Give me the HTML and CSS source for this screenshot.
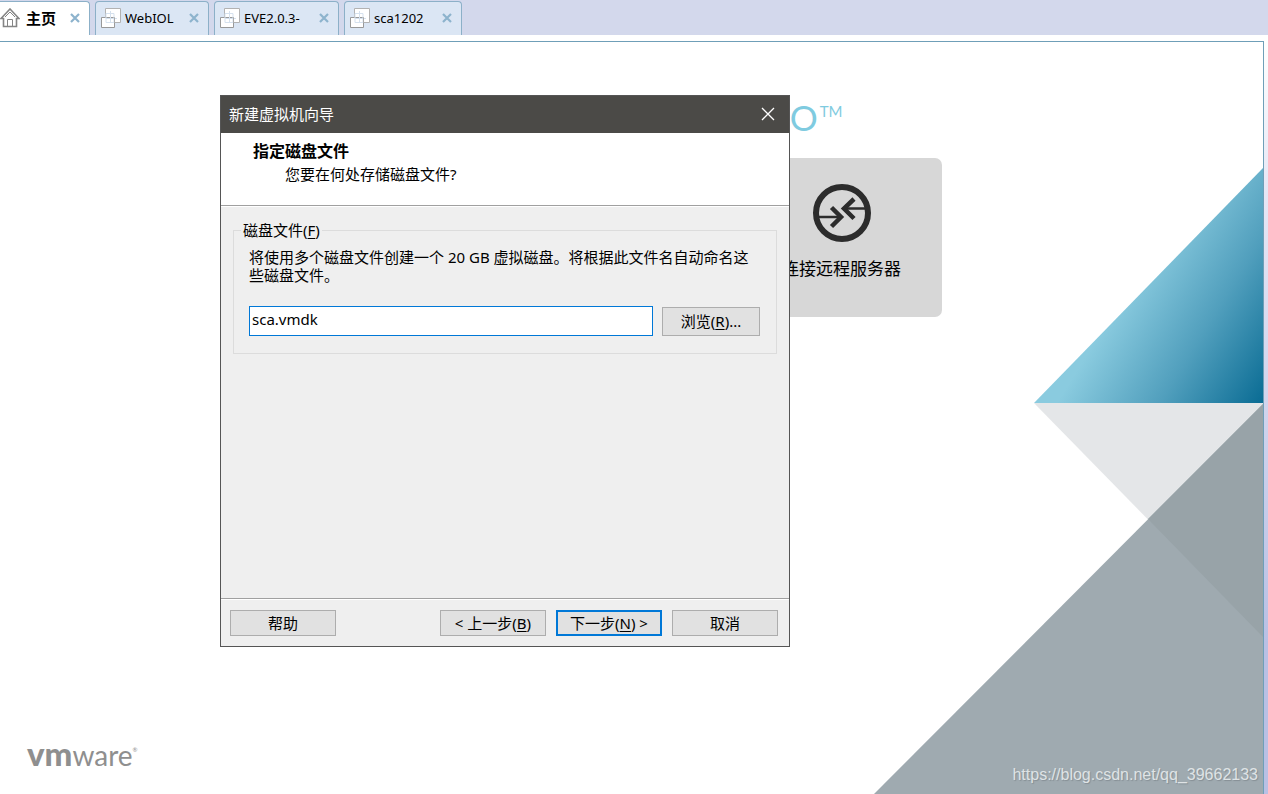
FILE: index.html
```html
<!DOCTYPE html>
<html lang="zh-CN">
<head>
<meta charset="utf-8">
<title>主页</title>
<link rel="stylesheet" href="styles.css">
</head>
<body>
<svg class="symbols" aria-hidden="true">
  <symbol id="pages" viewBox="0 0 20 20">
    <path d="M4.500 .5h15v14h-15z" fill="#fff" stroke="#b2b2b2"/>
    <path d="M.5 9.500h13v10H.5z" fill="#fff" stroke="#999"/>
    <path d="M5 5.500h8v9H5zM9.500 3v12M5 10.500h11" fill="none" stroke="#d5e1ee"/>
    <path d="M13.500 9.500v5" stroke="#aaa"/>
  </symbol>
  <symbol id="cross" viewBox="0 0 10 10">
    <path d="M1 1l8 8M9 1L1 9" fill="none" stroke="#8db3cd" stroke-width="2.200"/>
  </symbol>
</svg>
<nav class="tabs">
  <div class="tab tab-home">
    <svg class="tab-icon" viewBox="0 0 20 20"><path d="M1 10.500L10 1l9 9.500h-2.500V18.500h-13V10.500z" fill="#fff" stroke="#858585" stroke-width="1.600"/><path d="M7.500 18v-6.500h5V18M5 9l5-5 5 5" fill="none" stroke="#858585"/></svg>
    <span class="tab-name">主页</span>
    <button class="tab-close" aria-label="关闭"><svg><use href="#cross"/></svg></button>
  </div>
  <div class="tab tab-web">
    <svg class="tab-icon"><use href="#pages"/></svg>
    <span class="tab-name">WebIOL</span>
    <button class="tab-close" aria-label="关闭"><svg><use href="#cross"/></svg></button>
  </div>
  <div class="tab tab-eve">
    <svg class="tab-icon"><use href="#pages"/></svg>
    <span class="tab-name">EVE2.0.3-</span>
    <button class="tab-close" aria-label="关闭"><svg><use href="#cross"/></svg></button>
  </div>
  <div class="tab tab-sca">
    <svg class="tab-icon"><use href="#pages"/></svg>
    <span class="tab-name">sca1202</span>
    <button class="tab-close" aria-label="关闭"><svg><use href="#cross"/></svg></button>
  </div>
</nav>
<div class="frame">
  <main class="home">
    <svg class="scene" viewBox="0 0 389 626" aria-hidden="true">
      <defs>
        <linearGradient id="sea" gradientUnits="userSpaceOnUse" x1="160" y1="235" x2="326" y2="337">
          <stop offset=".1" stop-color="#8acbdf"/><stop offset=".55" stop-color="#519fbd"/><stop offset="1" stop-color="#0a6c94"/>
        </linearGradient>
      </defs>
      <path d="M160 235H389V469z" fill="#e4e6e8"/>
      <path d="M389 236V626H0z" fill="#9faab0"/>
      <path d="M389 236V469L274 351z" fill="#98a3a8"/>
      <path d="M160 235L389 0V235z" fill="url(#sea)"/>
    </svg>
    <div class="brand"><span class="brand-o">O</span><span class="brand-tm">TM</span></div>
    <div class="tiles">
      <button class="tile">
        <svg class="tile-icon" viewBox="0 0 60 60" fill="none" stroke="#2c2c2c">
          <circle cx="30" cy="30" r="26" stroke-width="6"/>
          <path d="M7 34H29M53 25.500H32" stroke-width="2.500"/>
          <path d="M19.500 24.500L29 34l-9.500 9.500M42 16L32 25.500l10 10" stroke-width="4.500"/>
        </svg>
        <span>连接远程服务器</span>
      </button>
    </div>
    <footer class="foot">
      <div class="vendor"><b>vm</b><span>ware</span><span class="reg">®</span></div>
      <div class="blog">https://blog.csdn.net/qq_39662133</div>
    </footer>
  </main>
</div>
<form class="dialog" role="dialog" aria-labelledby="dialog-title">
  <header class="titlebar">
    <span id="dialog-title">新建虚拟机向导</span>
    <button type="button" class="dialog-close" aria-label="关闭"><svg viewBox="0 0 14 14"><path d="M1 1l12 12M13 1L1 13" stroke="#fff" stroke-width="1.300"/></svg></button>
  </header>
  <div class="intro">
    <h1>指定磁盘文件</h1>
    <p>您要在何处存储磁盘文件?</p>
  </div>
  <div class="body">
    <fieldset>
      <legend><label for="disk">磁盘文件(<u>F</u>)</label></legend>
      <p>将使用多个磁盘文件创建一个 20 GB 虚拟磁盘。将根据此文件名自动命名这些磁盘文件。</p>
      <div class="row">
        <input id="disk" type="text" value="sca.vmdk">
        <button type="button" class="btn browse">浏览(<u>R</u>)...</button>
      </div>
    </fieldset>
  </div>
  <div class="actions">
    <button type="button" class="btn help">帮助</button>
    <button type="button" class="btn">&lt; 上一步(<u>B</u>)</button>
    <button type="button" class="btn primary">下一步(<u>N</u>) &gt;</button>
    <button type="button" class="btn">取消</button>
  </div>
</form>
</body>
</html>
```

FILE: styles.css
```css
* { box-sizing: border-box; }
body {
  margin: 0;
  min-height: 100vh;
  display: flex;
  flex-direction: column;
  position: relative;
  overflow: hidden;
  background: #fff;
  color: #000;
  font: 15px/18px "Noto Sans", "Noto Sans CJK SC", sans-serif;
}
button, input { font: inherit; color: inherit; margin: 0; }
button { padding: 0; border: 0; background: none; }
.symbols { display: none; }

.tabs {
  height: 35px;
  padding-top: 1px;
  display: flex;
  gap: 5px;
  background: #d3d8ec;
}
.tab {
  display: flex;
  align-items: center;
  padding: 0 9px 2px 5px;
  border: 1px solid #8cb0c8;
  border-bottom: 0;
  border-radius: 4px 4px 0 0;
  background: #dbe6f4;
  font-size: 13px;
}
.tab-home {
  width: 90px;
  padding-left: 0;
  border-left: 0;
  border-top-left-radius: 0;
  background: #fff;
  font-size: 15px;
  font-weight: 700;
}
.tab-web { width: 114px; }
.tab-eve { width: 125px; }
.tab-sca { width: 118px; }
.tab-icon { width: 20px; height: 20px; flex: none; }
.tab-name { margin: 0 auto 0 4px; white-space: nowrap; }
.tab-home .tab-name { margin-left: 6px; }
.tab-close { display: flex; }
.tab-close svg { width: 10px; height: 10px; }

.frame {
  flex: 1;
  display: flex;
  margin-top: 6px;
  padding-right: 4px;
  background: linear-gradient(#fff, #e6e7f5 20%, #b9c0e4 80%);
}
.home {
  flex: 1;
  display: flex;
  flex-direction: column;
  align-items: center;
  position: relative;
  padding-top: 54px;
  border-top: 1px solid #6f9fb8;
  border-right: 1px solid #6f9fb8;
  background: #fff;
}
.scene { position: absolute; right: 0; bottom: 0; width: 389px; height: 626px; }

.brand {
  width: 422px;
  height: 62px;
  display: flex;
  justify-content: flex-end;
  align-items: flex-start;
  gap: 2px;
  color: #7fcbe0;
  font-family: Lato, sans-serif;
}
.brand-o { font-size: 35px; line-height: 42px; }
.brand-tm { font-size: 15px; line-height: 30px; }

.tiles { width: 620px; display: flex; justify-content: flex-end; }
.tile {
  width: 200px;
  height: 159px;
  display: flex;
  flex-direction: column;
  align-items: center;
  padding-top: 25px;
  border-radius: 7px;
  background: #d7d7d7;
  font-size: 17px;
  line-height: 24px;
}
.tile-icon { width: 60px; height: 60px; margin-bottom: 14px; }

.foot {
  position: relative;
  width: 100%;
  margin-top: auto;
  padding: 0 5px 8px 27px;
  display: flex;
  justify-content: space-between;
  align-items: flex-end;
}
.vendor {
  display: flex;
  align-items: baseline;
  padding-bottom: 12px;
  color: #8f8f8f;
  font: 28px/38px Lato, sans-serif;
}
.vendor b { font-size: 33px; font-weight: 900; }
.reg { align-self: flex-start; font-size: 6px; line-height: 32px; }
.blog {
  color: #dfe3e5;
  font: 16px/22px "Liberation Sans", Arial, sans-serif;
  text-shadow: 1px 1px 1px #858e94;
}

.dialog {
  position: absolute;
  left: 220px;
  top: 95px;
  width: 570px;
  min-height: 552px;
  display: flex;
  flex-direction: column;
  border: 1px solid #555;
  background: #efefef;
}
.titlebar {
  height: 37px;
  display: flex;
  align-items: center;
  justify-content: space-between;
  padding: 0 14px 2px 8px;
  background: #4b4a47;
  color: #fff;
}
.dialog-close { display: flex; }
.dialog-close svg { width: 14px; height: 14px; }
.intro {
  height: 73px;
  padding: 8px 32px;
  background: #fff;
  border-bottom: 1px solid #a0a0a0;
}
.intro h1 { margin: 0; font-size: 16px; line-height: 20px; }
.intro p { margin: 4px 0 0 32px; }
.body {
  flex: 1;
  padding: 14px 12px;
  border-top: 1px solid #fff;
}
fieldset {
  margin: 0;
  min-width: 0;
  padding: 9px 16px 17px 15px;
  border: 1px solid #dcdcdc;
}
legend { margin-left: -8px; padding: 0 2px; }
fieldset p { margin: 0 8px 22px 0; }
.row { display: flex; align-items: center; gap: 9px; }
.row input {
  flex: 1;
  min-width: 0;
  height: 30px;
  padding: 0 2px 4px;
  border: 1px solid #0078d7;
  background: #fff;
  outline: 0;
}
.btn {
  width: 106px;
  height: 26px;
  border: 1px solid #adadad;
  background: #e1e1e1;
  white-space: nowrap;
}
.browse { width: 98px; height: 29px; }
.primary { border: 2px solid #0078d7; }
.actions {
  display: flex;
  gap: 10px;
  padding: 11px 11px 10px 9px;
  border-top: 1px solid #a0a0a0;
  box-shadow: inset 0 1px #fff;
}
.help { margin-right: auto; }
u { text-underline-offset: 2px; }
```
